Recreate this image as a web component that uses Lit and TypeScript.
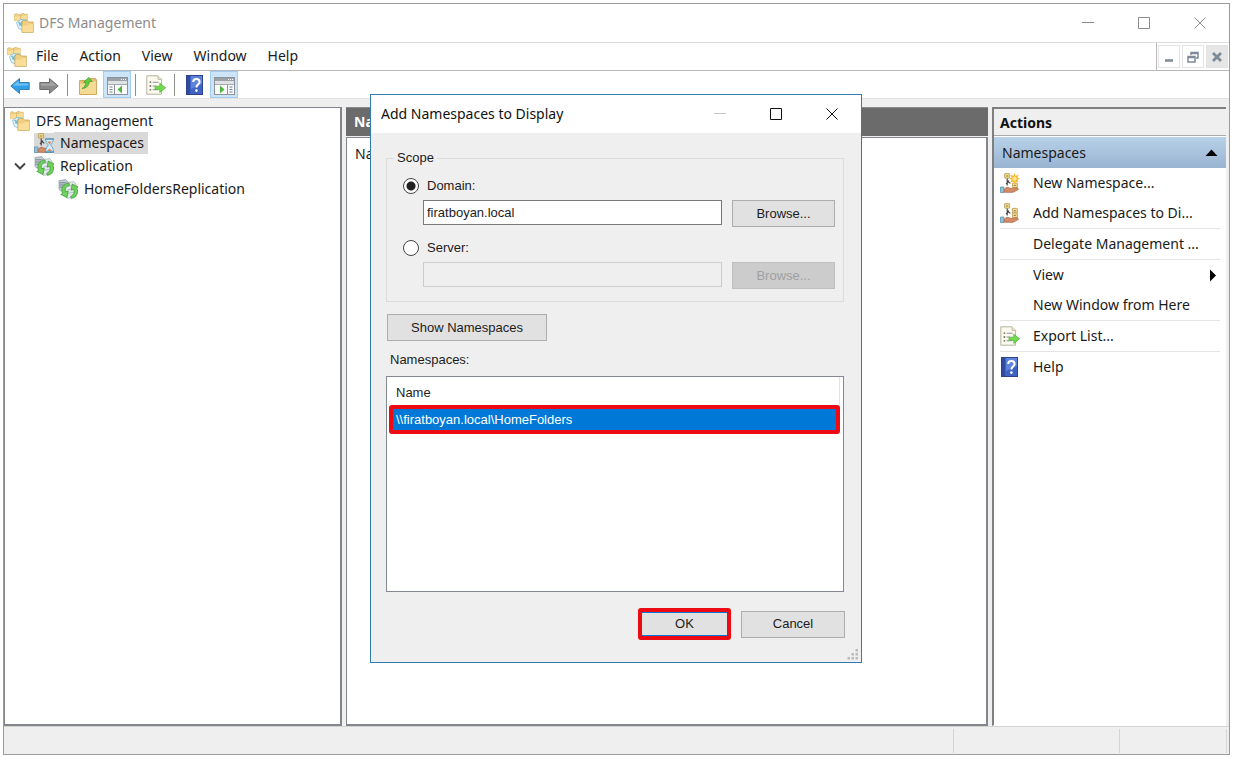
import { LitElement, html, css, svg } from "lit";
import { customElement, state } from "lit/decorators.js";

const folder = (x: number, y: number, s: number) => svg`
  <g transform="translate(${x} ${y}) scale(${s})">
    <path d="M0.5 2 L2 0.5 H5.5 L7 2 H11.5 V12 H0.5 Z" fill="#f0d080" stroke="#c9a455" stroke-width="0.8"/>
    <path d="M1 5.6 H5.5 L7 4.2 H11.2 V11.6 H1 Z" fill="#f9dd98"/>
  </g>`;

const dfsIcon = html`<svg class="ico" viewBox="0 0 20 20" aria-hidden="true">
  ${folder(0, 0.5, 0.6)}${folder(6.4, 0, 0.6)}
  <path d="M2.5 9.5 L7 6.4 L13 7 L13.5 11 L9 17 L4.5 15.5 Z" fill="#e4f4fa" stroke="#7fbfd8" stroke-width="0.8"/>
  <path d="M4.5 9 L8.5 13.5 M9 7.5 L5.5 12.5" stroke="#6fb9d6" stroke-width="1.4"/>
  ${folder(7.4, 7, 1.03)}
</svg>`;

const cabinet = (x: number, y: number) => svg`
  <rect x="${x}" y="${y}" width="5" height="4.6" rx="0.5" fill="#f3dc97" stroke="#b8964c" stroke-width="0.8"/>
  <path d="M${x + 1.3} ${y + 2.4} H${x + 3.7}" stroke="#8f7436" stroke-width="0.9"/>`;

const hand = svg`
  <path d="M0.5 14 H4 V19.5 H0.5 Z" fill="#8fc3da" stroke="#4f88a6" stroke-width="0.7"/>
  <path d="M4.4 16 L7 14.2 L11 15.4 L17.4 14.8 L18.4 16.4 L13 19.3 H4.4 Z" fill="#d58b66" stroke="#a65d3d" stroke-width="0.7"/>`;

const treeShape = svg`
  ${cabinet(4.6, 0.6)}
  <path d="M7.2 5.4 V12.4 M7.2 8 L10.4 10.4 M6 11 L9 7.6" fill="none" stroke="#3c3c3c" stroke-width="1.1"/>`;

const nsHourIcon = html`<svg class="ico" viewBox="0 0 20 20" aria-hidden="true">
  ${treeShape}${hand}
  <path d="M11.5 6 H19.5 L18.5 9.5 L16.5 12 L18.8 15 L19.5 19 H11.5 L12.3 15 L14.4 12 L12.3 9.5 Z" fill="#d9eef8" stroke="#5da3c8" stroke-width="0.9"/>
  <path d="M13.2 8.6 H17.8 L15.5 11.6 Z M12.8 18 L15.5 15.4 L18.2 18 Z" fill="#d58b66"/>
  <path d="M11 6 H20 M11 19.2 H20" stroke="#3d86b2" stroke-width="1.2"/>
</svg>`;

const nsAddIcon = html`<svg class="ico" viewBox="0 0 20 20" aria-hidden="true">
  ${treeShape}${cabinet(12.4, 5.4)}${cabinet(12.4, 10)}${hand}
</svg>`;

const nsNewIcon = html`<svg class="ico" viewBox="0 0 20 20" aria-hidden="true">
  ${treeShape}${cabinet(12.4, 10)}${hand}
  <path d="M14.5 0 L15.6 3 L18.6 1.4 L17.4 4.4 L20 5.6 L17.4 6.8 L18.6 9.6 L15.6 8.4 L14.5 11 L13.4 8.4 L10.4 9.6 L11.6 6.8 L9 5.6 L11.6 4.4 L10.4 1.4 L13.4 3 Z" fill="#f6b52e"/>
  <circle cx="14.5" cy="5.6" r="2.2" fill="#ffe890"/>
</svg>`;

const replIcon = html`<svg class="ico" viewBox="0 0 20 20" aria-hidden="true">
  <path d="M1 1.6 L7.6 0.6 L9.6 2.4 V11 L2.8 12 L1 10.4 Z" fill="#c3cdd2" stroke="#8b999f" stroke-width="0.7"/>
  <path d="M1.5 3.8 H9 M1.5 6 H9 M1.5 8.2 H6" stroke="#6b7a84" stroke-width="0.9"/>
  <path d="M7 4 L15.4 2.6 L18 5 V17.4 L9.6 19.4 L7 17 Z" fill="#e3e9ea" stroke="#9daab0" stroke-width="0.7"/>
  <path d="M9.6 7.4 L15.5 6.4 M9.6 10.8 L15.5 10 M9.6 14.2 L15.5 13.4" stroke="#b2bdc2" stroke-width="0.9"/>
  <path d="M11 4 C5 4.6 2.6 9.8 4.6 14.4 L2.8 15.4 L9 18.6 L10.2 12 L7.6 12.8 C6.4 9.6 8 7 11.4 6.4 Z" fill="#6fd25c" stroke="#3d9c3a" stroke-width="0.8"/>
  <path d="M13.4 19.4 C18.8 18.4 20.8 13 18.8 9 L20 8 L14.2 5 L13.2 11.2 L15.8 10.4 C16.8 13.2 15.6 16.4 12.8 17.2 Z" fill="#6fd25c" stroke="#3d9c3a" stroke-width="0.8"/>
</svg>`;

const backIcon = html`<svg class="ico" viewBox="0 0 20 20" aria-hidden="true">
  <path d="M0.8 11 L9.5 3.5 V7.5 H19.2 V14.5 H9.5 V18.5 Z" fill="#2f9fe6" stroke="#3b7fae" stroke-width="1"/>
  <path d="M2.8 10.8 L8.6 5.8 V8.6 H18.2 V10.6 Z" fill="#6cc2f5"/>
</svg>`;
const forwardIcon = html`<svg class="ico" viewBox="0 0 20 20" aria-hidden="true">
  <path d="M19.2 11 L10.5 3.5 V7.5 H0.8 V14.5 H10.5 V18.5 Z" fill="#8b8b8b" stroke="#6e6e6e" stroke-width="1"/>
  <path d="M17.2 10.8 L11.4 5.8 V8.6 H1.8 V10.6 Z" fill="#a6a6a6"/>
</svg>`;
const upIcon = html`<svg class="ico" viewBox="0 0 20 20" aria-hidden="true">
  <path d="M1.5 5.5 H9 L11 3.5 H17.5 L18.5 5 V19.5 H1.5 Z" fill="#e3c173" stroke="#c39c4e" stroke-width="0.8"/>
  <path d="M2 8.5 H11 L13 6.5 H18 V19 H2 Z" fill="#f5da94"/>
  <path d="M4 13.5 C6 12.6 7.6 10.6 7.8 7.2 L5.6 7.4 L10.6 2.4 L14.2 6.4 L11.2 6.6 C11 10.6 8.4 13.4 4 13.5 Z" fill="#62cc3e" stroke="#45a22e" stroke-width="0.8"/>
</svg>`;
const exportIcon = html`<svg class="ico" viewBox="0 0 20 20" aria-hidden="true">
  <path d="M0.8 0.8 H12 L15.6 4.4 V19.2 H0.8 Z" fill="#fdfbee" stroke="#b5b29d" stroke-width="1"/>
  <path d="M12 0.8 V4.4 H15.6" fill="#e9e5cd" stroke="#b5b29d" stroke-width="0.8"/>
  <path d="M3.6 7.2 H5.2 M3.6 11 H5.2 M3.6 14.8 H5.2" stroke="#555" stroke-width="1.3"/>
  <path d="M6.6 7.2 H12.6 M6.6 11 H9.6 M6.6 14.8 H12" stroke="#8d8e9c" stroke-width="1.1"/>
  <path d="M9 11.2 H13.8 V8.2 L19.6 12.8 L13.8 17.4 V14.4 H9 Z" fill="#74d852" stroke="#55b83c" stroke-width="0.8"/>
</svg>`;
const helpIcon = html`<svg class="ico" viewBox="0 0 20 20" aria-hidden="true">
  <rect x="1.5" y="0.5" width="16" height="19" fill="#3f62c4" stroke="#2c438c"/>
  <rect x="2" y="1" width="3" height="18" fill="#2f4ba2"/>
  <path d="M6 1 H17 V9 L6 14 Z" fill="#5f82da"/>
  <path d="M8.2 7 C8.2 3 14.6 3 14.6 7 C14.6 9.4 11.4 9.4 11.4 12.4" fill="none" stroke="#fff" stroke-width="2"/>
  <circle cx="11.4" cy="15.6" r="1.3" fill="#fff"/>
</svg>`;
const paneIcon = (right: boolean) => html`<svg class="ico wide" viewBox="0 0 21 18" aria-hidden="true">
  <rect x="0.5" y="0.5" width="20" height="17" fill="#fbfbfb" stroke="#8b929a"/>
  <rect x="1" y="1" width="19" height="3" fill="#9aa1a9"/>
  <path d="M14 2.5 H15 M16 2.5 H17 M18 2.5 H19" stroke="#fff"/>
  <rect x="1" y="4" width="19" height="3" fill="#dfe2e5"/>
  <path d="M1 7.5 H20" stroke="#a3abb3"/>
  ${right
    ? svg`<path d="M13.5 8 V17" stroke="#8b929a"/>
        <path d="M15.5 10 H18.5 M15.5 12.5 H18.5 M15.5 15 H18.5" stroke="#6f7f92"/>
        <path d="M6 8.5 L10.5 12.5 L6 16.5 Z" fill="#4fb53c"/>`
    : svg`<path d="M7.5 8 V17" stroke="#8b929a"/><path d="M2.5 10 H5.5 M2.5 12.5 H5.5 M2.5 15 H5.5" stroke="#6f7f92"/>
        <path d="M15 8.5 L10.5 12.5 L15 16.5 Z" fill="#4fb53c"/>`}
</svg>`;

const minGlyph = svg`<path d="M0 5.5 H12"/>`;
const maxGlyph = svg`<path d="M0.5 0.5 H11.5 V11.5 H0.5 Z"/>`;
const closeGlyph = svg`<path d="M0.5 0.5 L11.5 11.5 M11.5 0.5 L0.5 11.5"/>`;
const glyph = (g: unknown) => html`<svg class="glyph" viewBox="0 0 12 12" aria-hidden="true">${g}</svg>`;

const shared = css`
  * { box-sizing: border-box; }
  button, input { font: inherit; color: inherit; margin: 0; }
  button { padding: 0; border: 0; background: none; }
  .ico { width: 20px; height: 20px; display: block; flex: none; }
  .wide { width: 21px; height: 18px; }
  .glyph { width: 12px; height: 12px; display: block; fill: none; stroke: currentColor; }
  .caption { display: flex; align-items: center; padding-right: 1px; }
  .caption button { width: 56px; height: 36px; display: grid; place-items: center; }
`;

@customElement("namespace-dialog")
export class NamespaceDialog extends LitElement {
  @state() private scope = "domain";

  static styles = [shared, css`
    :host {
      display: flex; flex-direction: column; box-sizing: border-box;
      border: 1px solid #2f7cae; background: #efefef; color: #1c1c1c;
      font: 13px/18px "Liberation Sans", Arial, sans-serif;
    }
    .title { display: flex; height: 38px; padding-left: 10px; background: #fff; align-items: center; color: #111;
      font: 14px/20px "Noto Sans", sans-serif; }
    h2 { font: inherit; margin: 0; flex: 1; }
    .title .off { color: #c4c4c4; }
    .body { flex: 1; display: flex; flex-direction: column; padding: 16px 17px 0 15px; }
    fieldset { margin: 0; border: 1px solid #dcdcdc; padding: 9px 8px 12px 16px; min-width: 0; }
    legend { padding: 0 3px; margin-left: -9px; height: 18px; }
    .choice { display: flex; align-items: center; gap: 8px; height: 20px; margin-bottom: 4px; }
    .choice input { appearance: none; width: 16px; height: 16px; border: 1px solid #444; border-radius: 50%; background: #fff; }
    .choice input:checked { background: radial-gradient(circle, #222 0 4px, #fff 5px); }
    .line { display: grid; grid-template-columns: 1fr 103px; gap: 10px; padding-left: 20px; align-items: start; }
    .line input { height: 25px; min-width: 0; width: 100%; border: 1px solid #7a7a7a; background: #fff; padding: 0 3px; }
    .line input:disabled { border-color: #ccc; background: #efefef; }
    .first { margin-bottom: 11px; }
    .btn { height: 27px; border: 1px solid #adadad; background: #e1e1e1; }
    .btn:disabled { background: #ccc; border-color: #bfbfbf; color: #a0a0a0; }
    .show { width: 160px; margin: 12px 0 0 1px; }
    .label { margin: 10px 0 7px 4px; }
    .list { height: 216px; border: 1px solid #828790; background: #fff; padding: 0 3px 0 2px; }
    table { width: 100%; border-collapse: separate; border-spacing: 0; }
    th { text-align: left; font-weight: normal; height: 28px; padding: 4px 7px 0; border-right: 1px solid #e2e2e2; }
    td { height: 29px; padding: 0 3px; border: 4px solid #ed0a12; border-radius: 3px; background: #0078d7; color: #fff; }
    .foot { display: flex; justify-content: flex-end; gap: 10px; margin: 16px -1px 0 0; align-items: center; }
    .foot .btn { width: 104px; }
    .foot .ok { width: 93px; height: 32px; border: 4px solid #ed0a12; border-radius: 3px; box-shadow: inset 0 1px #0078d7, inset 0 -1px #0078d7; }
    .grip { width: 12px; height: 12px; align-self: flex-end; margin: auto -15px 2px 0; fill: #bcbcbc; display: block; }
  `];

  render() {
    return html`
      <div class="title">
        <h2>Add Namespaces to Display</h2>
        <div class="caption">
          <button class="off" aria-label="Minimize" disabled>${glyph(minGlyph)}</button>
          <button aria-label="Maximize">${glyph(maxGlyph)}</button>
          <button aria-label="Close">${glyph(closeGlyph)}</button>
        </div>
      </div>
      <div class="body">
        <fieldset>
          <legend>Scope</legend>
          <div class="choice">
            <input type="radio" name="scope" id="domain" .checked=${this.scope === "domain"} @change=${() => (this.scope = "domain")}>
            <label for="domain">Domain:</label>
          </div>
          <div class="line first">
            <input type="text" aria-label="Domain" value="firatboyan.local" ?disabled=${this.scope !== "domain"}>
            <button class="btn" ?disabled=${this.scope !== "domain"}>Browse...</button>
          </div>
          <div class="choice">
            <input type="radio" name="scope" id="server" .checked=${this.scope === "server"} @change=${() => (this.scope = "server")}>
            <label for="server">Server:</label>
          </div>
          <div class="line">
            <input type="text" aria-label="Server" ?disabled=${this.scope !== "server"}>
            <button class="btn" ?disabled=${this.scope !== "server"}>Browse...</button>
          </div>
        </fieldset>
        <button class="btn show">Show Namespaces</button>
        <div class="label" id="list-label">Namespaces:</div>
        <div class="list">
          <table aria-labelledby="list-label">
            <thead><tr><th>Name</th></tr></thead>
            <tbody><tr><td>\\\\firatboyan.local\\HomeFolders</td></tr></tbody>
          </table>
        </div>
        <div class="foot">
          <button class="btn ok">OK</button>
          <button class="btn">Cancel</button>
        </div>
        <svg class="grip" viewBox="0 0 12 12" aria-hidden="true">
          <path d="M8.5 1h2.5v2.5h-2.5z M8.5 5h2.5v2.5h-2.5z M4.5 5h2.5v2.5h-2.5z M8.5 9h2.5v2.5h-2.5z M4.5 9h2.5v2.5h-2.5z M0.5 9h2.5v2.5h-2.5z"/>
        </svg>
      </div>`;
  }
}

@customElement("app-root")
export class AppRoot extends LitElement {
  static styles = [shared, css`
    :host {
      display: block; height: 100vh; box-sizing: border-box; padding: 3px 5px 3px 3px; background: #fff;
      position: relative; overflow: hidden; color: #1a1a1a; font: 14px/20px "Noto Sans", sans-serif;
    }
    .window { height: 100%; display: flex; flex-direction: column; border: 1px solid #9a9a9a; background: #efefef; }
    .titlebar { height: 38px; flex: none; display: flex; align-items: center; background: #fff; padding-left: 10px; gap: 5px; color: #8c8c8c; }
    h1 { font: inherit; margin: 0; flex: 1; }
    .menubar { height: 29px; flex: none; display: flex; background: #fff; border-top: 1px solid #dcdcdc; border-bottom: 1px solid #b8b8b8; padding-left: 3px; align-items: center; }
    .menus { display: flex; flex: 1; gap: 21px; margin-left: 9px; padding-bottom: 2px; }
    .mdi { align-self: stretch; display: flex; gap: 2px; align-items: center; border-left: 1px solid #b8b8b8; padding: 0 1px; }
    .mdi button { width: 22px; height: 23px; border: 1px solid #e2e2e2; display: grid; place-items: center; color: #7d8a99; }
    .mdi .shut { background: #e6e6e6; }
    .toolbar { height: 28px; flex: none; display: flex; align-items: center; gap: 1px; background: #fff; border-bottom: 1px solid #e2e2e2; padding-left: 2px; }
    .toolbar button { height: 27px; width: 28px; display: grid; place-items: center; }
    .toolbar .on { background: #cce4f7; border: 1px solid #a5cdef; padding-top: 3px; }
    .sep { width: 1px; height: 22px; margin: 0 5px 0 3px; background: #8f8f8f; }
    .panes { flex: 1; min-height: 0; display: grid; grid-template-columns: 338px minmax(0, 1fr) 234px; gap: 4px; padding: 8px 3px 0 0; }
    .tree { background: #fff; border: 1px solid #82858c; border-width: 1px 2px 2px 1px; padding: 2px 5px; }
    ul { list-style: none; margin: 0; padding: 0; }
    .tree ul ul { padding-left: 24px; }
    .node { display: flex; align-items: center; gap: 4px; height: 22px; margin-bottom: 1px; }
    .tree > ul > li > .node { margin: 0; }
    .node span { padding: 0 4px 0 3px; line-height: 22px; margin-left: -1px; }
    .selected span { background: #d9d9d9; margin-left: -4px; padding-left: 6px; }
    .selected .ico { background: #d9d9d9; }
    .parent { margin-left: -20px; }
    .chev { width: 12px; height: 12px; margin-right: 4px; fill: none; stroke: #444; stroke-width: 2; }
    .center { display: flex; flex-direction: column; min-width: 0; }
    .center h2 { margin: 0 0 1px; height: 29px; background: #6b6b6b; border-top: 1px solid #8a8a8a; color: #fff; font: bold 14px/27px "Noto Sans", sans-serif; padding-left: 8px; }
    .content { flex: 1; background: #fff; border: 1px solid #82858c; border-width: 1px 2px 2px 1px; padding: 6px 8px; }
    .actions { background: #fff; border-top: 2px solid #808080; border-left: 2px solid #808080; border-bottom: 1px solid #fff; min-width: 0; }
    .actions h2 { margin: 0; height: 27px; background: #efefef; border-bottom: 1px solid #a9a9a9; font: bold 14px/27px "Noto Sans", sans-serif; padding-left: 6px; color: #111; }
    .group { display: flex; width: 100%; height: 31px; margin-top: 1px; align-items: center; justify-content: space-between; padding: 0 8px;
      background: linear-gradient(#b9d1ea, #99b4d1); }
    .tri { width: 13px; height: 13px; display: block; fill: #000; }
    .items { padding: 0 6px; }
    .items li { height: 30px; }
    .items .rule { border-bottom: 1px solid #e4e4e4; height: 31px; }
    .items button { display: flex; align-items: center; width: 100%; height: 30px; gap: 13px; text-align: left; white-space: nowrap; }
    .items .txt { flex: 1; }
    .blank { width: 20px; flex: none; }
    .status { height: 28px; flex: none; display: grid; grid-template-columns: 1fr 166px 107px 2px; border-top: 1px solid #d4d4d4; padding-top: 2px; }
    .status div { border-right: 1px solid #d4d4d4; height: 24px; }
    .status div:last-child { border: 0; }
    .dialog { position: absolute; left: 370px; top: 94px; width: 492px; height: 569px; }
  `];

  private actions = [
    { text: "New Namespace...", icon: nsNewIcon },
    { text: "Add Namespaces to Di...", icon: nsAddIcon, rule: true },
    { text: "Delegate Management ...", rule: true },
    { text: "View", more: true },
    { text: "New Window from Here", rule: true },
    { text: "Export List...", icon: exportIcon, rule: true },
    { text: "Help", icon: helpIcon },
  ];

  render() {
    return html`
      <div class="window">
        <header class="titlebar">
          ${dfsIcon}<h1>DFS Management</h1>
          <div class="caption">
            <button aria-label="Minimize">${glyph(minGlyph)}</button>
            <button aria-label="Maximize">${glyph(maxGlyph)}</button>
            <button aria-label="Close">${glyph(closeGlyph)}</button>
          </div>
        </header>
        <nav class="menubar">
          ${dfsIcon}
          <div class="menus">
            ${["File", "Action", "View", "Window", "Help"].map((m) => html`<button>${m}</button>`)}
          </div>
          <div class="mdi">
            <button aria-label="Minimize child">${glyph(svg`<path d="M2 9.5 H10" stroke-width="2.5"/>`)}</button>
            <button aria-label="Restore child">${glyph(svg`<path d="M1 5.5 H8 V11 H1 Z M1 6.5 H8 M4 4 V1.5 H11 V7 H9 M4 2.5 H11" stroke-width="1.5"/>`)}</button>
            <button class="shut" aria-label="Close child">${glyph(svg`<path d="M2 2 L10 10 M10 2 L2 10" stroke-width="2.8"/>`)}</button>
          </div>
        </nav>
        <div class="toolbar">
          <button aria-label="Back">${backIcon}</button>
          <button aria-label="Forward">${forwardIcon}</button>
          <span class="sep"></span>
          <button aria-label="Up one level">${upIcon}</button>
          <button class="on" aria-label="Show or hide console tree">${paneIcon(false)}</button>
          <span class="sep"></span>
          <button aria-label="Export list">${exportIcon}</button>
          <span class="sep"></span>
          <button aria-label="Help">${helpIcon}</button>
          <button class="on" aria-label="Show or hide action pane">${paneIcon(true)}</button>
        </div>
        <main class="panes">
          <section class="tree">
            <ul>
              <li>
                <div class="node">${dfsIcon}<span>DFS Management</span></div>
                <ul>
                  <li><div class="node selected">${nsHourIcon}<span>Namespaces</span></div></li>
                  <li>
                    <div class="node parent">
                      <svg class="chev" viewBox="0 0 12 12" aria-hidden="true"><path d="M1 3.5 L6 8.5 L11 3.5"/></svg>
                      ${replIcon}<span>Replication</span>
                    </div>
                    <ul><li><div class="node">${replIcon}<span>HomeFoldersReplication</span></div></li></ul>
                  </li>
                </ul>
              </li>
            </ul>
          </section>
          <section class="center">
            <h2>Na</h2>
            <div class="content">Na</div>
          </section>
          <aside class="actions">
            <h2>Actions</h2>
            <button class="group">Namespaces
              <svg class="tri" viewBox="0 0 13 13" aria-hidden="true"><path d="M0.5 10 L6.5 3.5 L12.5 10 Z"/></svg>
            </button>
            <ul class="items">
              ${this.actions.map((a) => html`<li class=${a.rule ? "rule" : ""}>
                <button>${a.icon ?? html`<span class="blank"></span>`}<span class="txt">${a.text}</span>
                  ${a.more ? html`<svg class="tri" viewBox="0 0 13 13" aria-hidden="true"><path d="M3 0.5 L9 6.5 L3 12.5 Z"/></svg>` : ""}
                </button></li>`)}
            </ul>
          </aside>
        </main>
        <footer class="status"><div></div><div></div><div></div><div></div></footer>
      </div>
      <namespace-dialog class="dialog" role="dialog" aria-label="Add Namespaces to Display"></namespace-dialog>`;
  }
}
